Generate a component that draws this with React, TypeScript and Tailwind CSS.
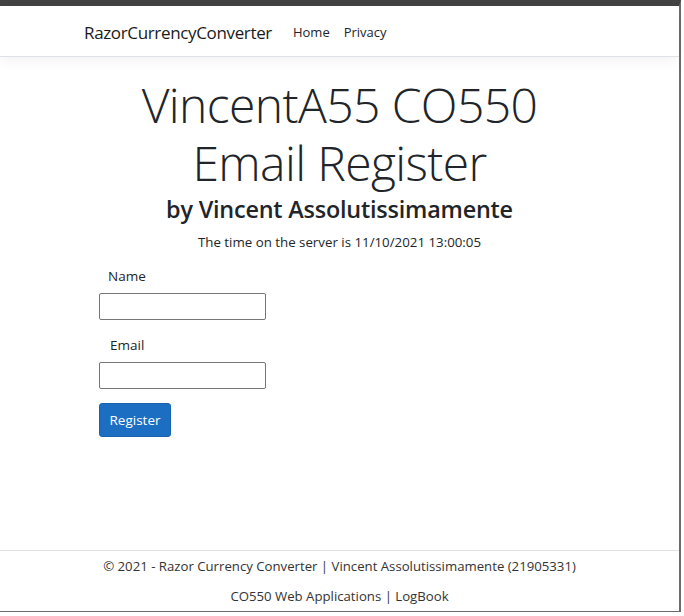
export default function App() {
  return (
    <div
      className="relative h-[616px] w-[684px] overflow-hidden bg-white text-[#212529]"
      style={{ fontFamily: '"Open Sans", "Noto Sans", sans-serif' }}
    >
      <div className="flex h-[612px] w-[681px] flex-col border-t-[6px] border-r-2 border-b border-t-[#424242] border-r-[#6b6b6b] border-b-[#6b6b6b]">
        <nav className="flex h-[51px] shrink-0 items-center border-b border-[#dee2e6] bg-white pl-[84px] pt-[3px] shadow-[0_4px_12px_rgba(0,0,0,0.05)]">
          <span className="text-[17px] tracking-[-0.35px] text-[#1a1a1a]">RazorCurrencyConverter</span>
          <div className="ml-[21px] flex gap-[14px] text-[13px] text-[#212529]">
            <span>Home</span>
            <span>Privacy</span>
          </div>
        </nav>

        <main className="flex-1">
          <div className="mt-[19px] text-center">
            <h1 className="text-[48px] font-light leading-[58px] tracking-[-0.6px] text-[#212529]">
              VincentA55 CO550
              <br />
              Email Register
            </h1>
            <h2 className="mt-[1px] text-[23.4px] font-semibold leading-[32px] tracking-[-0.2px] text-[#212529]">
              by Vincent Assolutissimamente
            </h2>
            <p className="mt-[7px] text-[13.3px] leading-[20px]">
              The time on the server is 11/10/2021 13:00:05
            </p>
          </div>

          <form className="ml-[99px] mt-[14px] flex w-[167px] flex-col">
            <label className="ml-[9px] text-[13.5px] leading-[20px]">Name</label>
            <input className="mt-[7px] h-[27px] w-[167px] rounded-[2px] border border-[#767676] bg-white" />
            <label className="ml-[11px] mt-[15px] text-[13.5px] leading-[20px]">Email</label>
            <input className="mt-[7px] h-[27px] w-[167px] rounded-[2px] border border-[#767676] bg-white" />
            <button
              type="button"
              className="mt-[14px] h-[34px] w-[72px] rounded-[3px] border border-[#1861ac] bg-[#1b6ec2] text-[13.5px] text-white"
            >
              Register
            </button>
          </form>
        </main>

        <footer className="flex h-[61px] shrink-0 flex-col items-center border-t border-[#dee2e6] pt-[5px] text-[13.2px] leading-[20px] text-[#333]">
          <p>© 2021 - Razor Currency Converter | Vincent Assolutissimamente (21905331)</p>
          <p className="mt-[10px]">CO550 Web Applications | LogBook</p>
        </footer>
      </div>
    </div>
  );
}
